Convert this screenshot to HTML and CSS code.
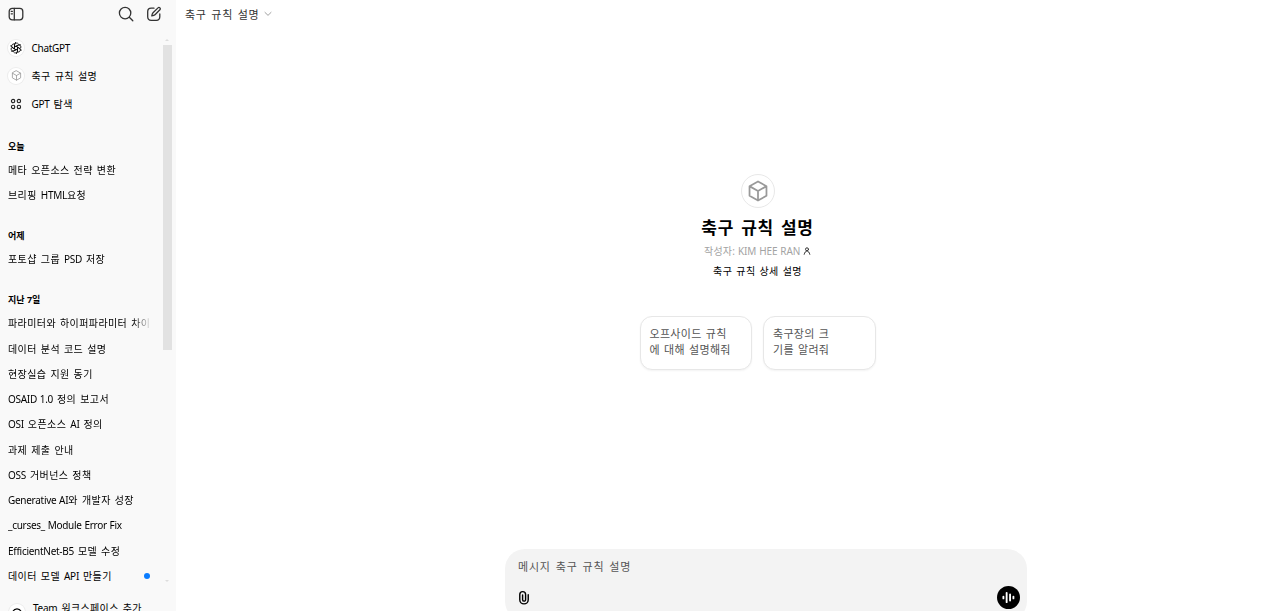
FILE: index.html
```html
<!DOCTYPE html>
<html lang="ko">
<head>
    <meta charset="UTF-8">
    <meta name="viewport" content="width=device-width, initial-scale=1.0">
    <title>축구 규칙 설명</title>
    <link rel="stylesheet" href="styles.css">
</head>
<body>
    <aside class="sidebar">
        <div class="toolbar">
            <svg class="icon" viewBox="0 0 16 16"><rect x="1.2" y="2.4" width="13.6" height="11.4" rx="3"/><path d="M6.3 2.4v11.4M3.2 5.3h1.2M3.2 7.8h1.2"/></svg>
            <svg class="icon search" viewBox="0 0 16 16"><circle cx="7.1" cy="7.1" r="5.7"/><path d="M11.3 11.3l3.5 3.5"/></svg>
            <svg class="icon" viewBox="0 0 16 16"><path d="M8 2.2H5.2C2.8 2.2 1.7 3.3 1.7 5.7v5.1c0 2.4 1.1 3.5 3.5 3.5h5.1c2.4 0 3.5-1.1 3.5-3.5V8"/><path d="M12 1.9c.6-.6 1.4-.5 1.9 0s.6 1.3 0 1.9L9 8.7c-.7.7-1.7 1-3.2 1.2.2-1.5.5-2.5 1.2-3.2z"/></svg>
        </div>
        <div class="history">
            <nav class="list">
                <a class="app">
                    <span class="avatar">
                        <svg class="openai" viewBox="0 0 24 24">
                            <path id="strand" d="M9 13.7V6.2a4.3 4.3 0 0 1 7.8-2.4M12.200 8.500l4.900-2.800a4.300 4.300 0 0 1 4.300 0"/>
                            <use href="#strand" transform="rotate(60 12 12)"/>
                            <use href="#strand" transform="rotate(120 12 12)"/>
                            <use href="#strand" transform="rotate(180 12 12)"/>
                            <use href="#strand" transform="rotate(240 12 12)"/>
                            <use href="#strand" transform="rotate(300 12 12)"/>
                        </svg>
                    </span>
                    <span class="en">ChatGPT</span>
                </a>
                <a class="app">
                    <span class="avatar"><svg class="cube" viewBox="0 0 20 20"><path d="M10 1.5l7.5 4.2v8.6L10 18.5l-7.5-4.2V5.7zM2.8 5.9L10 10l7.2-4.1M10 10v8.3"/></svg></span>
                    <span>축구 규칙 설명</span>
                </a>
                <a class="app">
                    <span class="avatar plain"><svg class="grid" viewBox="0 0 12 12"><circle cx="3.1" cy="3.1" r="1.7"/><circle cx="8.9" cy="3.1" r="1.7"/><circle cx="3.1" cy="8.9" r="1.7"/><circle cx="8.9" cy="8.9" r="1.7"/></svg></span>
                    <span><span class="en">GPT</span> 탐색</span>
                </a>

                <h3>오늘</h3>
                <a class="chat">메타 오픈소스 전략 변환</a>
                <a class="chat">브리핑 <span class="en">HTML</span>요청</a>

                <h3>어제</h3>
                <a class="chat">포토샵 그룹 <span class="en">PSD</span> 저장</a>

                <h3>지난 7일</h3>
                <a class="chat">파라미터와 하이퍼파라미터 차이</a>
                <a class="chat">데이터 분석 코드 설명</a>
                <a class="chat">현장실습 지원 동기</a>
                <a class="chat"><span class="en">OSAID 1.0</span> 정의 보고서</a>
                <a class="chat"><span class="en">OSI</span> 오픈소스 <span class="en">AI</span> 정의</a>
                <a class="chat">과제 제출 안내</a>
                <a class="chat"><span class="en">OSS</span> 거버넌스 정책</a>
                <a class="chat"><span class="en">Generative AI</span>와 개발자 성장</a>
                <a class="chat"><span class="en">_curses_ Module Error Fix</span></a>
                <a class="chat"><span class="en">EfficientNet-B5</span> 모델 수정</a>
                <a class="chat unread"><span>데이터 모델 <span class="en">API</span> 만들기</span><span class="dot"></span></a>
            </nav>
            <div class="scrollbar">
                <span class="arrow up"></span>
                <span class="thumb"></span>
                <span class="arrow down"></span>
            </div>
        </div>
        <div class="workspace">
            <span class="avatar"><svg class="team" viewBox="0 0 16 16"><path d="M3.500 8.500C4.300 6 5.800 4.800 8 4.800s3.700 1.200 4.500 3.700"/></svg></span>
            <span><span class="en">Team</span> 워크스페이스 추가</span>
        </div>
    </aside>

    <main class="main">
        <header class="header">
            <span>축구 규칙 설명</span>
            <svg class="chevron" viewBox="0 0 10 6"><path d="M1.2 1L5 4.7 8.8 1"/></svg>
        </header>
        <section class="intro">
            <div class="logo"><svg class="cube" viewBox="0 0 20 20"><path d="M10 1.3l7.7 4.3v8.8L10 18.7l-7.7-4.3V5.6zM2.6 5.8L10 10l7.4-4.2M10 10v8.5"/></svg></div>
            <h1>축구 규칙 설명</h1>
            <p class="author">작성자: <span class="en">KIM HEE RAN</span> <svg class="person" viewBox="0 0 8 8"><circle cx="4" cy="2.3" r="1.5"/><path d="M1.2 7.3C1.7 5.4 2.7 4 4 4s2.3 1.4 2.8 3.3"/></svg></p>
            <p class="desc">축구 규칙 상세 설명</p>
            <div class="cards">
                <button class="card">오프사이드 규칙<br>에 대해 설명해줘</button>
                <button class="card">축구장의 크<br>기를 알려줘</button>
            </div>
        </section>
        <div class="composer">
            <div class="prompt">메시지 축구 규칙 설명</div>
            <div class="actions">
                <svg class="clip" viewBox="0 0 12 16"><path d="M10.5 5v5.3a4.5 4.5 0 0 1-9 0V4.8a3.1 3.1 0 0 1 6.2 0v5.5a1.6 1.6 0 0 1-3.2 0V5.2"/></svg>
                <span class="voice"><svg viewBox="0 0 14 14"><path d="M1.5 6v2M5 2v10M8.7 3.8v6.4M12.3 6v2"/></svg></span>
            </div>
        </div>
    </main>
</body>
</html>
```
FILE: styles.css
```css
* {
    box-sizing: border-box;
}
body {
    margin: 0;
    height: 611px;
    overflow: hidden;
    display: flex;
    font-family: "Noto Sans", "Noto Sans CJK KR", sans-serif;
    font-size: 10px;
    color: #000;
    background: #fff;
}
svg {
    fill: none;
    stroke: currentColor;
    stroke-linecap: round;
    stroke-linejoin: round;
    flex: none;
}
.en {
    letter-spacing: -0.28px;
    word-spacing: 0.4px;
}
.sidebar {
    width: 176px;
    height: 611px;
    flex: none;
    display: flex;
    flex-direction: column;
    overflow: hidden;
    background: #f9f9f9;
}
.toolbar {
    height: 28px;
    flex: none;
    display: flex;
    align-items: center;
    padding: 0 14.5px 0 8px;
    gap: 12px;
}
.icon {
    width: 16px;
    height: 16px;
    color: #333;
    stroke-width: 1.3;
}
.search {
    margin-left: auto;
}
.history {
    height: 561px;
    flex: none;
    display: flex;
    overflow: hidden;
}
.list {
    width: 150px;
    padding: 6px 0 0 8px;
    flex: none;
}
.app {
    height: 27.9px;
    display: flex;
    align-items: center;
    gap: 7.5px;
    white-space: nowrap;
    word-spacing: 1px;
    letter-spacing: 0.4px;
}
.avatar {
    width: 16px;
    height: 16px;
    flex: none;
    display: flex;
    align-items: center;
    justify-content: center;
    border-radius: 50%;
    background: #fff;
    box-shadow: 0 0 0 1px #ececec;
}
.avatar.plain {
    background: none;
    box-shadow: none;
}
.openai {
    width: 12px;
    height: 12px;
    stroke-width: 1.6;
}
.avatar .cube {
    width: 11px;
    height: 11px;
    color: #999;
    stroke-width: 1.5;
}
.grid {
    width: 12px;
    height: 12px;
    color: #222;
    stroke-width: 1.1;
}
.list h3 {
    margin: 14.6px 0 0;
    height: 24.2px;
    font-size: 9px;
    font-weight: 700;
    line-height: 25px;
}
.app + h3 {
    margin-top: 16.2px;
}
.chat {
    height: 25.26px;
    line-height: 25px;
    display: block;
    overflow: hidden;
    white-space: nowrap;
    letter-spacing: 0.4px;
    word-spacing: 1px;
    mask-image: linear-gradient(to right, #000 125px, transparent 144px);
}
.unread {
    display: flex;
    align-items: center;
    justify-content: space-between;
    mask-image: none;
}
.dot {
    width: 6px;
    height: 6px;
    border-radius: 50%;
    background: #0a7cff;
}
.scrollbar {
    width: 10px;
    margin-left: 12px;
    padding: 11px 0 7px;
    display: flex;
    flex-direction: column;
    align-items: center;
}
.arrow {
    border: 2px solid transparent;
}
.up {
    border-top: 0;
    border-bottom-color: #ddd;
}
.down {
    margin-top: auto;
    border-bottom: 0;
    border-top-color: #ddd;
}
.thumb {
    width: 9px;
    height: 305px;
    margin-top: 4px;
    background: #e2e2e2;
}
.workspace {
    height: 40px;
    flex: none;
    display: flex;
    padding: 11px 0 0 9px;
    gap: 8px;
    line-height: 16px;
    white-space: nowrap;
    letter-spacing: 0.35px;
    word-spacing: 1.1px;
}
.workspace .avatar {
    margin-top: 4px;
}
.team {
    width: 16px;
    height: 16px;
    stroke-width: 1.2;
}
.main {
    flex: 1;
    height: 611px;
    display: flex;
    flex-direction: column;
}
.header {
    height: 28px;
    flex: none;
    display: flex;
    align-items: center;
    gap: 5px;
    padding-left: 9px;
    font-size: 11px;
    letter-spacing: 0.75px;
    word-spacing: 1px;
    color: #333;
}
.chevron {
    width: 8px;
    height: 6px;
    color: #888;
}
.intro {
    width: 236px;
    height: 521px;
    flex: none;
    display: flex;
    flex-direction: column;
    align-items: center;
    margin-left: 463.5px;
    padding-top: 146px;
}
.logo {
    width: 34px;
    height: 34px;
    display: flex;
    align-items: center;
    justify-content: center;
    border: 1px solid #e8e8e8;
    border-radius: 50%;
    color: #999;
}
.logo .cube {
    width: 22px;
    height: 22px;
    stroke-width: 1.6;
}
.intro h1 {
    margin: 7px 0 0;
    font-size: 17px;
    line-height: 25px;
    font-weight: 700;
    letter-spacing: 0.7px;
    word-spacing: 2px;
    color: #000;
}
.intro p {
    margin: 0;
    line-height: 20px;
    white-space: nowrap;
    letter-spacing: 0.4px;
    word-spacing: 1px;
}
.intro .author {
    margin-top: 1px;
    letter-spacing: 0.2px;
    word-spacing: 0;
    color: #a3a3a3;
}
.author .en {
    letter-spacing: -0.1px;
}
.person {
    width: 8px;
    height: 8px;
    color: #333;
}
.cards {
    display: flex;
    gap: 11px;
    margin-top: 35px;
}
.card {
    width: 112.5px;
    height: 54px;
    padding: 0 0 3px 9px;
    border: 1px solid #e7e7e7;
    border-radius: 12px;
    background: #fff;
    box-shadow: 0 1px 2px rgba(0, 0, 0, 0.05);
    font: inherit;
    font-size: 11px;
    line-height: 16px;
    text-align: left;
    white-space: nowrap;
    letter-spacing: 0.3px;
    word-spacing: 1px;
    color: #555;
}
.composer {
    width: 522px;
    height: 72px;
    flex: none;
    margin-left: 329px;
    padding: 8px 7px 0 13px;
    border-radius: 20px;
    background: #f3f3f3;
}
.prompt {
    font-size: 11px;
    line-height: 20px;
    word-spacing: 1.3px;
    letter-spacing: 0.8px;
    color: #555;
}
.actions {
    display: flex;
    align-items: center;
    justify-content: space-between;
    margin-top: 9px;
}
.clip {
    width: 12px;
    height: 15px;
    stroke-width: 1.5;
}
.voice {
    width: 23px;
    height: 23px;
    display: flex;
    align-items: center;
    justify-content: center;
    border-radius: 50%;
    background: #000;
    color: #fff;
}
.voice svg {
    width: 13px;
    height: 13px;
    stroke-width: 2;
}
```
